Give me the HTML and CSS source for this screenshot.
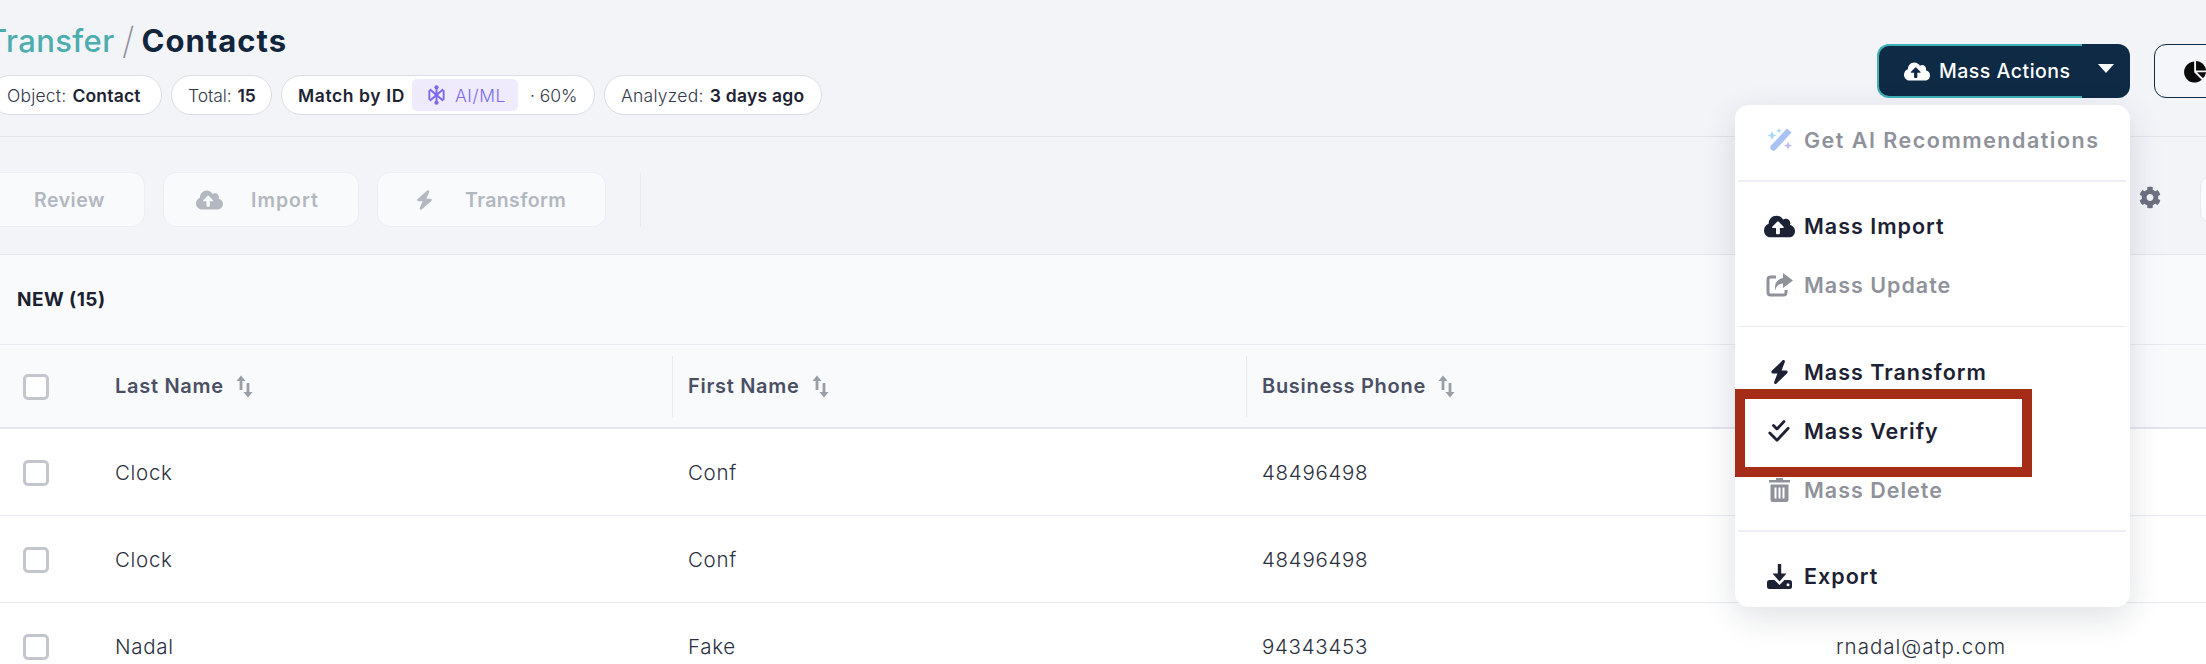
FILE: index.html
```html
<!DOCTYPE html>
<html lang="en">
<head>
<meta charset="utf-8">
<title>Transfer / Contacts</title>
<link rel="stylesheet" href="styles.css">
</head>
<body>
<div class="page">
  <header class="top">
    <div class="top-left">
      <h1 class="title"><span class="crumb">Transfer</span><span class="slash">/</span><span class="current">Contacts</span></h1>
      <div class="chips">
        <span class="chip chip-object">Object: <b>Contact</b></span>
        <span class="chip chip-total">Total: <b>15</b></span>
        <span class="chip chip-match"><b class="match-label">Match by ID</b><span class="ai-badge"><svg class="ai-icon" viewBox="0 0 22 22" fill="none" stroke="currentColor" stroke-width="2"><path d="M11 2v18M4 5l14 12M18 5L4 17M3.500 6v10M18.500 6v10"/><circle cx="11" cy="3" r="2.200" fill="currentColor" stroke="none"/><circle cx="11" cy="19" r="2.200" fill="currentColor" stroke="none"/><circle cx="11" cy="11" r="2" fill="currentColor" stroke="none"/></svg><span>AI/ML</span></span><span class="pct">· 60%</span></span>
        <span class="chip chip-analyzed">Analyzed: <b>3 days ago</b></span>
      </div>
    </div>
    <div class="top-right">
      <div class="split">
        <button class="split-main">
          <svg class="ic-cloud-sm" viewBox="0 0 640 512" fill="currentColor"><path d="M537.6 226.6c4.1-10.7 6.4-22.4 6.4-34.6 0-53-43-96-96-96-19.7 0-38.1 6-53.3 16.2C367 64.2 315.3 32 256 32c-88.4 0-160 71.6-160 160 0 2.7.1 5.4.2 8.1C40.2 219.8 0 273.2 0 336c0 79.5 64.5 144 144 144h368c70.7 0 128-57.3 128-128 0-61.9-44-113.6-102.4-125.4zM393.4 288H328v112c0 8.8-7.2 16-16 16h-48c-8.8 0-16-7.2-16-16V288h-65.4c-14.3 0-21.4-17.2-11.3-27.3l105.4-105.4c6.2-6.2 16.4-6.2 22.6 0l105.4 105.4c10.1 10.1 2.9 27.3-11.3 27.3z"/></svg>
          <span>Mass Actions</span>
        </button>
        <button class="split-caret" aria-label="More"><span class="caret"></span></button>
      </div>
      <button class="pie-btn" aria-label="Charts">
        <svg viewBox="0 0 24 24" class="ic-pie" fill="#0a0a0a"><path d="M10.6 1.6v11.2l7.9 7.9A11 11 0 1 1 10.6 1.6z"/><path d="M12.6 1A11 11 0 0 1 23 10.9H12.6z"/><path d="M13.6 12.9H23a11 11 0 0 1-3.2 6.2z"/></svg>
      </button>
    </div>
  </header>

  <div class="toolbar">
    <div class="tool-left">
      <button class="tool tool-review">Review</button>
      <button class="tool tool-import">
        <svg class="ic-t-cloud" viewBox="0 0 640 512" fill="currentColor"><path d="M537.6 226.6c4.1-10.7 6.4-22.4 6.4-34.6 0-53-43-96-96-96-19.7 0-38.1 6-53.3 16.2C367 64.2 315.3 32 256 32c-88.4 0-160 71.6-160 160 0 2.7.1 5.4.2 8.1C40.2 219.8 0 273.2 0 336c0 79.5 64.5 144 144 144h368c70.7 0 128-57.3 128-128 0-61.9-44-113.6-102.4-125.4zM393.4 288H328v112c0 8.8-7.2 16-16 16h-48c-8.8 0-16-7.2-16-16V288h-65.4c-14.3 0-21.4-17.2-11.3-27.3l105.4-105.4c6.2-6.2 16.4-6.2 22.6 0l105.4 105.4c10.1 10.1 2.9 27.3-11.3 27.3z"/></svg>
        <span>Import</span>
      </button>
      <button class="tool tool-transform">
        <svg class="ic-t-bolt" viewBox="0 0 448 512" fill="currentColor"><path d="M349.4 44.6c5.9-13.7 1.5-29.7-10.6-38.5s-28.6-8-39.9 1.8l-256 224c-10 8.8-13.6 22.9-8.9 35.3S50.7 288 64 288H175.5L98.6 467.4c-5.9 13.7-1.5 29.7 10.6 38.5s28.6 8 39.9-1.8l256-224c10-8.8 13.6-22.9 8.9-35.3s-16.6-20.7-30-20.7H272.5L349.4 44.6z"/></svg>
        <span>Transform</span>
      </button>
      <span class="tool-divider"></span>
    </div>
    <div class="tool-right">
      <svg class="ic-gear" viewBox="0 0 512 512" fill="currentColor"><path d="M487.4 315.7l-42.6-24.6c4.3-23.2 4.3-47 0-70.2l42.6-24.6c4.9-2.8 7.1-8.6 5.5-14-11.1-35.6-30-67.8-54.7-94.6-3.8-4.1-10-5.1-14.8-2.3L380.8 110c-17.9-15.4-38.5-27.3-60.8-35.1V25.8c0-5.6-3.9-10.5-9.4-11.7-36.7-8.2-74.3-7.8-109.2 0-5.5 1.2-9.4 6.1-9.4 11.7V75c-22.2 7.9-42.8 19.8-60.8 35.1L88.7 85.5c-4.9-2.8-11-1.9-14.8 2.3-24.7 26.7-43.6 58.9-54.7 94.6-1.7 5.4.6 11.2 5.5 14L67.3 221c-4.3 23.2-4.3 47 0 70.2l-42.6 24.6c-4.9 2.8-7.1 8.6-5.5 14 11.1 35.6 30 67.8 54.7 94.6 3.8 4.1 10 5.1 14.8 2.3l42.6-24.6c17.9 15.4 38.5 27.3 60.8 35.1v49.2c0 5.6 3.9 10.5 9.4 11.7 36.7 8.2 74.3 7.8 109.2 0 5.5-1.2 9.4-6.1 9.4-11.7v-49.2c22.2-7.9 42.8-19.8 60.8-35.1l42.6 24.6c4.9 2.8 11 1.9 14.8-2.3 24.7-26.7 43.6-58.9 54.7-94.6 1.5-5.5-.7-11.3-5.6-14.1zM256 336c-44.1 0-80-35.9-80-80s35.9-80 80-80 80 35.9 80 80-35.9 80-80 80z"/></svg>
      <div class="search-stub"></div>
    </div>
  </div>

  <section class="section-bar"><strong>NEW (15)</strong></section>

  <div class="table">
    <div class="tr th">
      <div class="td td-check"><span class="check"></span></div>
      <div class="td"><span>Last Name</span><svg class="sort" viewBox="0 0 18 24" fill="currentColor"><path d="M5 0.5l4.5 5.5H6.4v9H3.6V6H.5zM10.6 8h2.8v9h3.1l-4.5 5.5L7.500 17h3.100z"/></svg></div>
      <div class="td td-sep"><span>First Name</span><svg class="sort" viewBox="0 0 18 24" fill="currentColor"><path d="M5 0.5l4.5 5.5H6.4v9H3.6V6H.5zM10.6 8h2.8v9h3.1l-4.5 5.5L7.500 17h3.100z"/></svg></div>
      <div class="td td-sep"><span>Business Phone</span><svg class="sort" viewBox="0 0 18 24" fill="currentColor"><path d="M5 0.5l4.5 5.5H6.4v9H3.6V6H.5zM10.6 8h2.8v9h3.1l-4.5 5.5L7.500 17h3.100z"/></svg></div>
      <div class="td"></div>
    </div>
    <div class="tr">
      <div class="td td-check"><span class="check"></span></div>
      <div class="td">Clock</div><div class="td">Conf</div><div class="td">48496498</div><div class="td"></div>
    </div>
    <div class="tr">
      <div class="td td-check"><span class="check"></span></div>
      <div class="td">Clock</div><div class="td">Conf</div><div class="td">48496498</div><div class="td"></div>
    </div>
    <div class="tr">
      <div class="td td-check"><span class="check"></span></div>
      <div class="td">Nadal</div><div class="td">Fake</div><div class="td">94343453</div><div class="td td-mail">rnadal@atp.com</div>
    </div>
  </div>

  <div class="menu">
    <div class="menu-group menu-first">
      <div class="menu-item off-ai"><span class="mi"><svg width="27" height="25" viewBox="0 0 27 25"><path d="M21 1.500l4.500 4-16 17.500q-2 1.500-4 0l-.5-.5q-1.500-2 0-4z" fill="#a9c2f6"/><path d="M6 4l1.300 3.200L10.500 8.500 7.300 9.800 6 13l-1.300-3.200L1.500 8.500l3.200-1.300z" fill="#a6d8f8"/><path d="M13 1l.8 1.900 1.900.8-1.900.8L13 6.400l-.8-1.900-1.900-.8 1.900-.8z" fill="#a6d8f8"/><path d="M22 14.500l1.200 2.900 2.900 1.200-2.900 1.200L22 22.700l-1.200-2.900-2.900-1.200 2.900-1.200z" fill="#bdbaf8"/></svg></span><span>Get AI Recommendations</span></div>
    </div>
    <div class="menu-sep"></div>
    <div class="menu-group">
      <div class="menu-item"><span class="mi"><svg width="31" height="25" viewBox="0 0 640 512" fill="currentColor"><path d="M537.6 226.6c4.1-10.7 6.4-22.4 6.4-34.6 0-53-43-96-96-96-19.7 0-38.1 6-53.3 16.2C367 64.2 315.3 32 256 32c-88.4 0-160 71.6-160 160 0 2.7.1 5.4.2 8.1C40.2 219.8 0 273.2 0 336c0 79.5 64.5 144 144 144h368c70.700 0 128-57.300 128-128 0-61.900-44-113.600-102.400-125.400zM393.400 288H328v112c0 8.800-7.200 16-16 16h-48c-8.800 0-16-7.200-16-16V288h-65.400c-14.300 0-21.400-17.200-11.300-27.300l105.400-105.400c6.200-6.200 16.400-6.200 22.600 0l105.400 105.400c10.100 10.100 2.900 27.300-11.300 27.300z"/></svg></span><span>Mass Import</span></div>
      <div class="menu-item off"><span class="mi"><svg width="27" height="24" viewBox="0 0 27 24" fill="none"><path d="M10 4H4.500Q2 4 2 6.500v13Q2 22 4.500 22h13q2.500 0 2.500-2.500V17" stroke="currentColor" stroke-width="3"/><path d="M17 0l10 7.500-10 7.500v-4.500q-6 0-8 7-1-11 8-12.500z" fill="currentColor"/></svg></span><span>Mass Update</span></div>
    </div>
    <div class="menu-sep"></div>
    <div class="menu-group">
      <div class="menu-item"><span class="mi"><svg width="19" height="24" viewBox="0 0 448 512" preserveAspectRatio="none" fill="currentColor"><path d="M349.400 44.600c5.900-13.700 1.500-29.700-10.600-38.500s-28.600-8-39.900 1.800l-256 224c-10 8.800-13.600 22.900-8.900 35.300S50.700 288 64 288H175.500L98.600 467.400c-5.900 13.700-1.500 29.700 10.600 38.500s28.600 8 39.900-1.800l256-224c10-8.800 13.600-22.900 8.900-35.300s-16.600-20.700-30-20.700H272.500L349.400 44.600z"/></svg></span><span>Mass Transform</span></div>
      <div class="menu-item"><span class="mi"><svg width="22" height="22" viewBox="0 0 22 22" fill="none" stroke="currentColor" stroke-width="2.800" stroke-linecap="round" stroke-linejoin="round"><path d="M5.500 5.500l3.500 3.500 7-7.500M1.800 13l7.200 7.200 11.200-12"/></svg></span><span>Mass Verify</span></div>
      <div class="menu-item off"><span class="mi"><svg width="21" height="24" viewBox="0 0 21 24" fill="currentColor"><rect x="0" y="2" width="21" height="2.500"/><rect x="7" y="0" width="7" height="2"/><path fill-rule="evenodd" d="M1.500 6.500h18V22q0 2-2 2h-14q-2 0-2-2zM5.500 9.500v11h2v-11zM9.500 9.500v11h2v-11zM13.500 9.500v11h2v-11z"/></svg></span><span>Mass Delete</span></div>
    </div>
    <div class="menu-sep"></div>
    <div class="menu-group menu-last">
      <div class="menu-item"><span class="mi"><svg width="25" height="25" viewBox="0 0 25 25" fill="currentColor"><rect x="10.800" y="0" width="3.400" height="11"/><path d="M5.500 9.500h14l-7 8z"/><path fill-rule="evenodd" d="M2.500 16h5l5 5 5-5h5q2.500 0 2.500 2.500v4q0 2.500-2.500 2.500h-20Q0 25 0 22.500v-4Q0 16 2.500 16zM21 19.200a1.500 1.500 0 1 0 0 3 1.500 1.500 0 0 0 0-3z"/></svg></span><span>Export</span></div>
    </div>
  </div>

  <div class="highlight"></div>
</div>
</body>
</html>
```
FILE: styles.css
```css
* { box-sizing: border-box; }
html, body { margin: 0; padding: 0; }
body {
  font-family: Inter, "Noto Sans", "Liberation Sans", sans-serif;
  color: #23283a;
  background: #f3f4f8;
}
button { font-family: inherit; cursor: default; }
.page {
  position: relative;
  width: 2206px;
  height: 664px;
  overflow: hidden;
  background: #f3f4f8;
}

/* header */
.top {
  height: 137px;
  padding-top: 22px;
  display: flex;
  justify-content: space-between;
  align-items: flex-start;
  border-bottom: 1px solid #e2e4ea;
}
.title {
  margin: 0 0 15px -13px;
  height: 38px;
  line-height: 38px;
  font-size: 31px;
  font-weight: 700;
  display: flex;
  white-space: nowrap;
}
.crumb { color: #4cadae; font-weight: 500; letter-spacing: .4px; }
.slash {
  width: 27px;
  text-align: center;
  color: #8e909c;
  font-size: 37px;
  font-weight: 200;
}
.current { color: #11263c; letter-spacing: 1px; }
.chips { display: flex; gap: 9px; margin-left: -10px; }
.chip {
  height: 40px;
  display: inline-flex;
  align-items: center;
  gap: 6px;
  padding-left: 16px;
  background: #fff;
  border: 1.5px solid #dcdee4;
  border-radius: 20px;
  font-size: 17.5px;
  font-weight: 350;
  white-space: nowrap;
  color: #33384a;
}
.chip b { font-weight: 600; color: #1e2333; }
.chip-object { width: 172px; letter-spacing: .2px; }
.chip-total { width: 101px; letter-spacing: -.1px; }
.chip-match { width: 314px; gap: 7px; }
.chip-analyzed { width: 218px; letter-spacing: .25px; }
.chip b.match-label { letter-spacing: .6px; }
.ai-badge {
  height: 32px;
  width: 106px;
  flex: none;
  display: inline-flex;
  align-items: center;
  gap: 8px;
  padding-left: 14px;
  background: #efebfd;
  border-radius: 5px;
  color: #7b69ee;
  letter-spacing: .6px;
}
.ai-icon { width: 21px; height: 22px; flex: none; }
.pct { margin-left: 5px; }
.top-right { display: flex; gap: 24px; margin: 22px -48px 0 0; }
.split { display: flex; height: 54px; }
.split-main {
  width: 205px;
  display: flex;
  align-items: center;
  gap: 9px;
  padding: 0 0 0 25px;
  background: #0e2a45;
  color: #fff;
  border: 2px solid #3fb0b5;
  border-right: 0;
  border-radius: 12px 0 0 12px;
  font-size: 19.5px;
  font-weight: 500;
  letter-spacing: .5px;
}
.ic-cloud-sm { width: 26px; height: 21px; }
.split-caret {
  width: 48px;
  padding: 0 0 0 16px;
  border: 0;
  background: #0e2a45;
  border-radius: 0 12px 12px 0;
  display: flex;
  align-items: flex-start;
}
.caret {
  margin-top: 20px;
  width: 0;
  height: 0;
  border-left: 8px solid transparent;
  border-right: 8px solid transparent;
  border-top: 9px solid #fff;
}
.pie-btn {
  width: 100px;
  height: 54px;
  padding: 0 0 0 29px;
  display: flex;
  align-items: center;
  border: 1.5px solid #0e2a45;
  border-radius: 12px;
  background: #f5f6f9;
}
.ic-pie { width: 23px; height: 23px; }

/* toolbar */
.toolbar {
  height: 117px;
  padding-top: 35px;
  display: flex;
  justify-content: space-between;
  align-items: flex-start;
}
.tool-left { display: flex; gap: 18px; margin-left: -20px; align-items: stretch; }
.tool {
  height: 55px;
  display: flex;
  align-items: center;
  background: #f9fafc;
  border: 1px solid #eceef3;
  border-radius: 13px;
  color: #b3b7c0;
  font-size: 19.5px;
  font-weight: 600;
  letter-spacing: .5px;
}
.tool-review { width: 165px; padding-left: 53px; }
.tool-import { width: 196px; padding-left: 32px; gap: 28px; letter-spacing: 1px; }
.tool-transform { width: 229px; padding-left: 38px; gap: 32px; letter-spacing: .4px; }
.ic-t-cloud { width: 27px; height: 22px; }
.ic-t-bolt { width: 17px; height: 22px; }
.tool-divider { width: 1px; background: #e8eaef; margin-left: 16px; }
.tool-right {
  display: flex;
  align-items: center;
  gap: 39px;
  margin-right: -94px;
  height: 55px;
}
.ic-gear { width: 22px; height: 23px; color: #6c7080; margin-bottom: 5px; }
.search-stub {
  width: 100px;
  height: 47px;
  background: #f9fafc;
  border: 1px solid #e6e8ee;
  border-radius: 10px;
}

/* section */
.section-bar {
  height: 91px;
  display: flex;
  align-items: center;
  padding-left: 17px;
  background: #f9fafc;
  border-top: 1px solid #e4e6ec;
  border-bottom: 1px solid #e8eaef;
  font-size: 19px;
  letter-spacing: .45px;
  color: #1c2130;
}
.section-bar strong { font-weight: 700; }

/* table */
.table { background: #fff; }
.tr {
  display: grid;
  grid-template-columns: 99px 573px 574px 574px 1fr;
  height: 87px;
  border-bottom: 1px solid #eaebf0;
  align-items: center;
  font-size: 20.5px;
  font-weight: 350;
  letter-spacing: .7px;
  color: #2b3040;
}
.th {
  height: 84px;
  background: #f9fafc;
  border-bottom: 2px solid #e4e6ec;
  font-size: 20px;
  font-weight: 600;
  letter-spacing: .7px;
  color: #4a5064;
}
.td {
  padding-left: 16px;
  display: flex;
  align-items: center;
  height: 100%;
  position: relative;
  white-space: nowrap;
}
.td-mail { letter-spacing: 1px; }
.td-check { padding-left: 23px; }
.td-sep::before {
  content: "";
  position: absolute;
  left: 0;
  top: 11px;
  bottom: 10px;
  width: 1px;
  background: #e9ebf0;
}
.check {
  width: 26px;
  height: 26px;
  margin-top: 2px;
  background: #fff;
  border: 3px solid #c3c7cd;
  border-radius: 5px;
}
.sort { width: 18px; height: 24px; margin-left: 12px; margin-top: 2px; color: #9a9ea6; }

/* menu */
.menu {
  position: absolute;
  left: 1735px;
  top: 105px;
  width: 395px;
  height: 502px;
  background: #fff;
  border-radius: 14px;
  box-shadow: 0 10px 34px rgba(25, 35, 65, .14);
}
.menu-group { padding: 15px 0 11px; }
.menu-first { padding-top: 5px; }
.menu-last { padding-bottom: 0; }
.menu-sep { height: 1.5px; margin: 0 4px 0 3px; background: #eceef3; }
.menu-item {
  height: 59px;
  display: flex;
  align-items: center;
  gap: 7px;
  padding-left: 26px;
  font-size: 21.5px;
  font-weight: 600;
  letter-spacing: 1px;
  color: #1c2133;
}
.menu-item.off, .menu-item.off-ai { color: #8f929b; }
.menu-item.off-ai { letter-spacing: 1.5px; }
.mi { width: 36px; display: flex; justify-content: center; align-items: center; flex: none; }

.highlight {
  position: absolute;
  left: 1735px;
  top: 389px;
  width: 297px;
  height: 88px;
  border: 10px solid #a52c16;
}
```
